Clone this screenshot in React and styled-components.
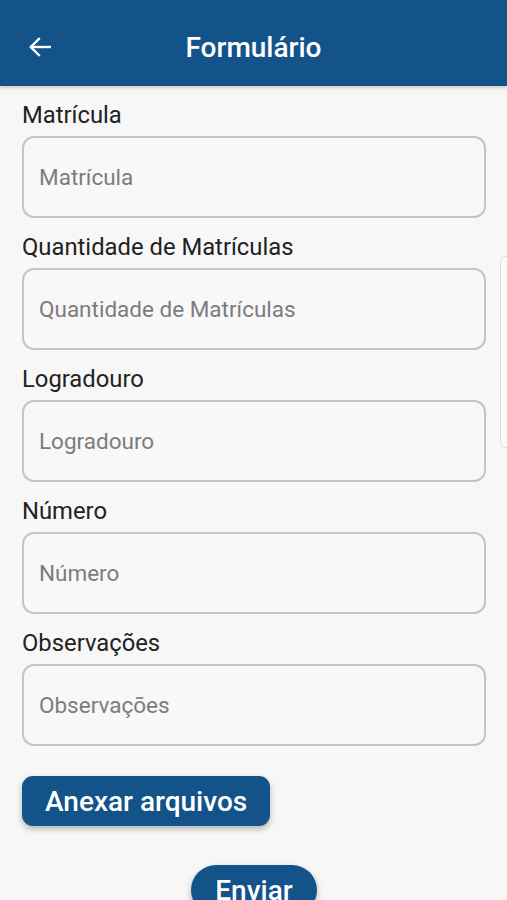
import React from 'react';
import styled, { createGlobalStyle } from 'styled-components';

const GlobalStyle = createGlobalStyle`
  html, body {
    margin: 0;
    padding: 0;
    background: #f7f7f7;
    font-family: Roboto, "Noto Sans", Arial, sans-serif;
  }
  * { box-sizing: border-box; }
`;

const Screen = styled.div`
  position: relative;
  width: 507px;
  height: 900px;
  overflow: hidden;
  background: #f7f7f7;
  display: flex;
  flex-direction: column;
`;

const Header = styled.header`
  height: 86px;
  flex: none;
  padding-top: 8px;
  background: #13538a;
  display: flex;
  align-items: center;
  position: relative;
  z-index: 2;
  box-shadow: 0 2px 3px rgba(0, 0, 0, 0.18);
`;

const BackButton = styled.button`
  border: none;
  background: none;
  padding: 0;
  margin-left: 26px;
  width: 28px;
  height: 28px;
  display: flex;
  align-items: center;
  justify-content: center;
  color: #fff;
`;

const Title = styled.h1`
  position: absolute;
  left: 0;
  right: 0;
  margin: 0;
  text-align: center;
  color: #fff;
  font-size: 28px;
  font-weight: 500;
  pointer-events: none;
`;

const Content = styled.main`
  display: flex;
  flex-direction: column;
  padding: 16px 21px 0 22px;
`;

const Field = styled.div`
  display: flex;
  flex-direction: column;
  margin-bottom: 16px;
`;

const Label = styled.label`
  font-size: 23.8px;
  color: #222;
  line-height: 26px;
  margin-bottom: 8px;
`;

const Input = styled.input`
  height: 82px;
  width: 100%;
  border: 2px solid #c4c4c4;
  border-radius: 12px;
  background: #f8f8f8;
  padding: 0 15px;
  font-family: inherit;
  font-size: 22.5px;
  color: #222;
  outline: none;
  &::placeholder {
    color: #7c7c7c;
  }
`;

const Button = styled.button`
  border: none;
  background: #13538a;
  color: #fff;
  font-family: inherit;
  font-weight: 500;
  font-size: 28px;
  height: 50px;
  padding: 0 ${(p) => p.$padX || 23}px;
  border-radius: ${(p) => p.$radius || 11}px;
  box-shadow: 0 3px 6px rgba(0, 0, 0, 0.28);
  align-self: ${(p) => p.$align || 'flex-start'};
`;

const Buttons = styled.div`
  display: flex;
  flex-direction: column;
  gap: 39px;
  margin-top: 14px;
`;

const ScrollHandle = styled.div`
  position: absolute;
  right: -6px;
  top: 256px;
  width: 13px;
  height: 192px;
  border: 1px solid #dcdcdc;
  border-radius: 6px;
  background: #f9f9f9;
`;

const fields = [
  'Matrícula',
  'Quantidade de Matrículas',
  'Logradouro',
  'Número',
  'Observações',
];

export default function App() {
  return (
    <Screen>
      <GlobalStyle />
      <Header>
        <BackButton aria-label="Voltar">
          <svg width="26" height="26" viewBox="0 0 24 24" fill="none" stroke="#fff" strokeWidth="2.2" strokeLinecap="square">
            <path d="M21 12H4" />
            <path d="M11 4.5L3.5 12L11 19.5" />
          </svg>
        </BackButton>
        <Title>Formulário</Title>
      </Header>
      <Content>
        {fields.map((f) => (
          <Field key={f}>
            <Label>{f}</Label>
            <Input placeholder={f} />
          </Field>
        ))}
        <Buttons>
          <Button>Anexar arquivos</Button>
          <Button $align="center" $radius={25} $padX={24}>Enviar</Button>
        </Buttons>
      </Content>
      <ScrollHandle />
    </Screen>
  );
}
